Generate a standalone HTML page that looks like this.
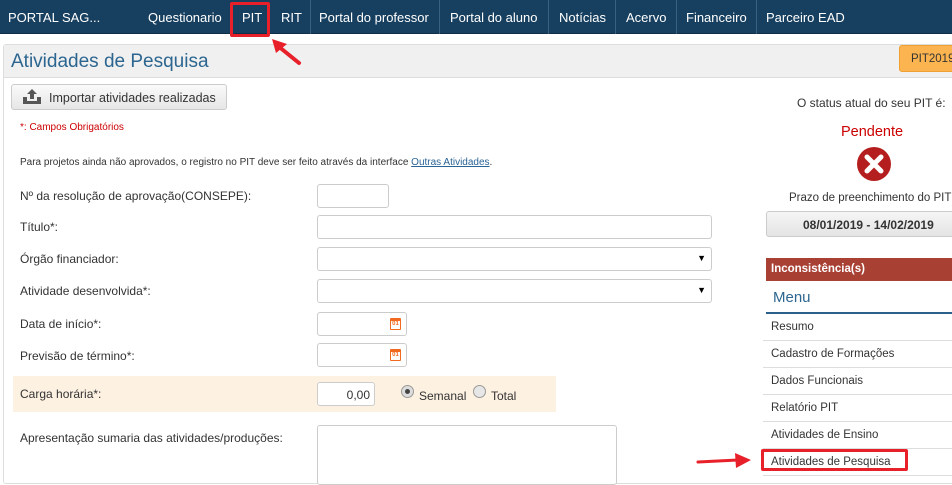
<!DOCTYPE html>
<html><head><meta charset="utf-8"><style>
*{box-sizing:border-box;margin:0;padding:0}
body{width:952px;height:479px;overflow:hidden;background:#fff;font-family:"Liberation Sans",sans-serif;font-size:13px;color:#333;position:relative}
.a{position:absolute;white-space:nowrap}
.nav{position:absolute;left:0;top:0;width:952px;height:34px;background:#173f5f;border-bottom:1px solid #0f2e47}
.nav span{position:absolute;top:10px;color:#fff;font-size:13px}
.sep{position:absolute;top:0;width:1px;height:34px;background:#3a6080}
.inp{position:absolute;border:1px solid #ccc;border-radius:3px;background:#fff;height:24px}
.lbl{position:absolute;font-size:12px;color:#333;white-space:nowrap}
.sel:after{content:"▼";position:absolute;right:5px;top:5px;font-size:9px;color:#000}
.cal{position:absolute;right:5px;top:5px;width:11px;height:12px;border:1.5px solid #f06a20;border-top-width:3px;border-radius:1px;font-size:6px;color:#f06a20;line-height:7px;text-align:center;font-weight:bold}
.mi{position:absolute;left:763px;width:189px;height:27px;border-bottom:1px solid #ddd;font-size:11.5px;color:#333;padding:7px 0 0 8px}
.top{z-index:5}
</style></head><body>
<div class="nav">
<span style="left:8px">PORTAL SAG...</span>
<span style="left:148px">Questionario</span>
<span style="left:242px">PIT</span>
<span style="left:281px">RIT</span>
<div class="sep" style="left:310px"></div>
<span style="left:319px">Portal do professor</span>
<div class="sep" style="left:439px"></div>
<span style="left:450px">Portal do aluno</span>
<div class="sep" style="left:548px"></div>
<span style="left:559px">Notícias</span>
<div class="sep" style="left:615px"></div>
<span style="left:626px">Acervo</span>
<div class="sep" style="left:676px"></div>
<span style="left:686px">Financeiro</span>
<div class="sep" style="left:756px"></div>
<span style="left:766px">Parceiro EAD</span>
</div>
<div class="a" style="left:3px;top:44px;width:960px;height:440px;border:1px solid #ddd;border-radius:3px"></div>
<div class="a" style="left:4px;top:45px;width:950px;height:33px;background:#f0f0f0;border-bottom:1px solid #ddd"></div>
<div class="a top" style="left:230px;top:2px;width:40px;height:35px;border:3px solid #e8202a;border-radius:2px"></div>
<svg class="a top" style="left:268px;top:36px" width="36" height="32"><line x1="31" y1="27" x2="10" y2="10" stroke="#e8202a" stroke-width="4" stroke-linecap="round"/><polygon points="4,3 19,8 8,17" fill="#e8202a"/></svg>
<div class="a" style="left:11px;top:51px;font-size:19px;color:#2c6690">Atividades de Pesquisa</div>
<div class="a" style="left:899px;top:45px;width:60px;height:27px;background:#fbb450;border:1px solid #f0a030;border-radius:3px;font-size:11.5px;color:#333;padding:7px 0 0 11px">PIT2019</div>
<div class="a" style="left:11px;top:84px;width:216px;height:26px;background:linear-gradient(#fafafa,#e6e6e6);border:1px solid #ccc;border-radius:3px;font-size:12.5px;padding:6px 0 0 37px">Importar atividades realizadas</div>
<svg class="a" style="left:22px;top:88px" width="20" height="17"><path d="M1 9v7h18V9h-4v4H5V9z" fill="#555"/><path d="M10 1l-5 5h3v5h4V6h3z" fill="#555"/></svg>
<div class="a" style="left:20px;top:122px;font-size:10px;color:#c00">*: Campos Obrigatórios</div>
<div class="a" style="left:20px;top:157px;font-size:10px;color:#333">Para projetos ainda não aprovados, o registro no PIT deve ser feito através da interface <u style="color:#2a6496">Outras Atividades</u>.</div>
<div class="lbl" style="left:20px;top:189px">Nº da resolução de aprovação(CONSEPE):</div>
<div class="inp" style="left:317px;top:184px;width:72px"></div>
<div class="lbl" style="left:20px;top:220px">Título*:</div>
<div class="inp" style="left:317px;top:215px;width:395px"></div>
<div class="lbl" style="left:20px;top:252px">Órgão financiador:</div>
<div class="inp sel" style="left:317px;top:247px;width:395px"></div>
<div class="lbl" style="left:20px;top:284px">Atividade desenvolvida*:</div>
<div class="inp sel" style="left:317px;top:279px;width:395px"></div>
<div class="lbl" style="left:20px;top:317px">Data de início*:</div>
<div class="inp" style="left:317px;top:312px;width:90px"><div class="cal">01</div></div>
<div class="lbl" style="left:20px;top:349px">Previsão de término*:</div>
<div class="inp" style="left:317px;top:343px;width:90px"><div class="cal">01</div></div>
<div class="a" style="left:13px;top:376px;width:543px;height:36px;background:#fdf1e2"></div>
<div class="lbl" style="left:20px;top:387px">Carga horária*:</div>
<div class="inp" style="left:317px;top:382px;width:58px;text-align:right;padding:5px 4px 0 0;font-size:12px">0,00</div>
<div class="a" style="left:401px;top:385px;width:13px;height:13px;border-radius:50%;border:1px solid #999;background:#ddd"><div style="margin:3px;width:5px;height:5px;border-radius:50%;background:#444"></div></div>
<div class="lbl" style="left:419px;top:389px">Semanal</div>
<div class="a" style="left:473px;top:385px;width:13px;height:13px;border-radius:50%;border:1px solid #999;background:#e6e6e6"></div>
<div class="lbl" style="left:491px;top:389px">Total</div>
<div class="lbl" style="left:20px;top:431px">Apresentação sumaria das atividades/produções:</div>
<div class="inp" style="left:317px;top:425px;width:300px;height:60px"></div>
<div class="a" style="left:797px;top:96px;font-size:12px">O status atual do seu PIT é:</div>
<div class="a" style="left:841px;top:124px;font-size:14.5px;color:#c00">Pendente</div>
<svg class="a" style="left:856px;top:146px" width="36" height="36"><circle cx="18" cy="18" r="17" fill="#b51e1e"/><path d="M11 11l14 14M25 11L11 25" stroke="#fff" stroke-width="5" stroke-linecap="round"/></svg>
<div class="a" style="left:789px;top:192px;font-size:11.5px">Prazo de preenchimento do PIT</div>
<div class="a" style="left:766px;top:211px;width:190px;height:26px;background:linear-gradient(#f5f5f5,#e4e4e4);border:1px solid #ccc;border-radius:3px;font-size:12px;font-weight:bold;padding:6px 0 0 36px">08/01/2019 - 14/02/2019</div>
<div class="a" style="left:766px;top:258px;width:190px;height:23px;background:#a94034;color:#fff;font-size:11.5px;font-weight:bold;padding:5px 0 0 5px">Inconsistência(s)</div>
<div class="a" style="left:773px;top:289px;font-size:15px;color:#2c6690">Menu</div>
<div class="a" style="left:766px;top:312px;width:190px;height:2px;background:#2c5f8a"></div>
<div class="mi" style="top:314px">Resumo</div>
<div class="mi" style="top:341px">Cadastro de Formações</div>
<div class="mi" style="top:368px">Dados Funcionais</div>
<div class="mi" style="top:395px">Relatório PIT</div>
<div class="mi" style="top:422px">Atividades de Ensino</div>
<div class="mi" style="top:449px">Atividades de Pesquisa</div>
<div class="a" style="left:761px;top:449px;width:147px;height:22px;border:3px solid #e8202a;border-radius:2px"></div>
<svg class="a" style="left:696px;top:451px" width="58" height="20"><line x1="2" y1="11" x2="42" y2="9" stroke="#e8202a" stroke-width="3" stroke-linecap="round"/><polygon points="55,9 39,2 40,17" fill="#e8202a"/></svg>
</body></html>
